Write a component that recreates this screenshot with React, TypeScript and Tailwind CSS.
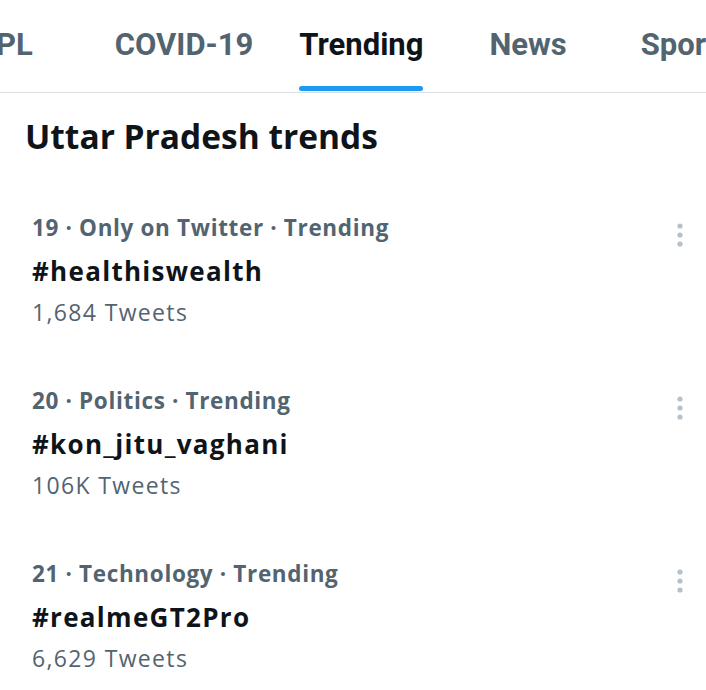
const tabs = [
    { label: "PL", cls: "-ml-[4px]" },
    { label: "COVID-19", cls: "ml-[82px]" },
    { label: "Trending", cls: "ml-[46px]", active: true },
    { label: "News", cls: "ml-[66px]" },
    { label: "Sports", cls: "ml-[74px]" },
];

const trends = [
    { meta: "19 · Only on Twitter · Trending", tag: "#healthiswealth", count: "1,684 Tweets" },
    { meta: "20 · Politics · Trending", tag: "#kon_jitu_vaghani", count: "106K Tweets" },
    { meta: "21 · Technology · Trending", tag: "#realmeGT2Pro", count: "6,629 Tweets" },
];

function Dots() {
    return (
        <svg width="10" height="26" viewBox="0 0 10 26" className="mt-[8px] mr-[21px] shrink-0">
            <circle cx="5" cy="4" r="2.6" fill="#b5c1ca" />
            <circle cx="5" cy="13" r="2.6" fill="#b5c1ca" />
            <circle cx="5" cy="22" r="2.6" fill="#b5c1ca" />
        </svg>
    );
}

export default function App() {
    return (
        <div className="w-[706px] h-[690px] overflow-hidden bg-white font-['Open_Sans',sans-serif]">
            <div className="h-[93px] border-b border-[#dadfe3] flex items-start whitespace-nowrap overflow-hidden font-['Roboto',sans-serif]">
                {tabs.map((t) => (
                    <div key={t.label} className={`${t.cls} shrink-0 flex flex-col pt-[25px]`}>
                        <span
                            className={`text-[31px] leading-[40px] font-bold ${
                                t.active ? "text-[#0f1419]" : "text-[#536471]"
                            }`}
                        >
                            {t.label}
                        </span>
                        {t.active && <div className="mt-[21px] h-[5px] rounded-full bg-[#1d9bf0]" />}
                    </div>
                ))}
            </div>

            <h2 className="px-[25px] pt-[22px] text-[33.5px] leading-[42px] font-bold text-[#0f1419]">
                Uttar Pradesh trends
            </h2>

            <div className="pt-[57px]">
                {trends.map((t) => (
                    <div key={t.tag} className="flex justify-between pl-[32px] h-[173px]">
                        <div className="flex flex-col">
                            <span className="text-[22.5px] leading-[28px] font-bold tracking-[0.65px] text-[#536471]">{t.meta}</span>
                            <span className="mt-[14px] text-[26px] leading-[30px] font-bold tracking-[1.3px] text-[#0f1419]">{t.tag}</span>
                            <span className="mt-[12px] text-[23px] leading-[28px] tracking-[1.35px] text-[#536471]">{t.count}</span>
                        </div>
                        <Dots />
                    </div>
                ))}
            </div>
        </div>
    );
}
